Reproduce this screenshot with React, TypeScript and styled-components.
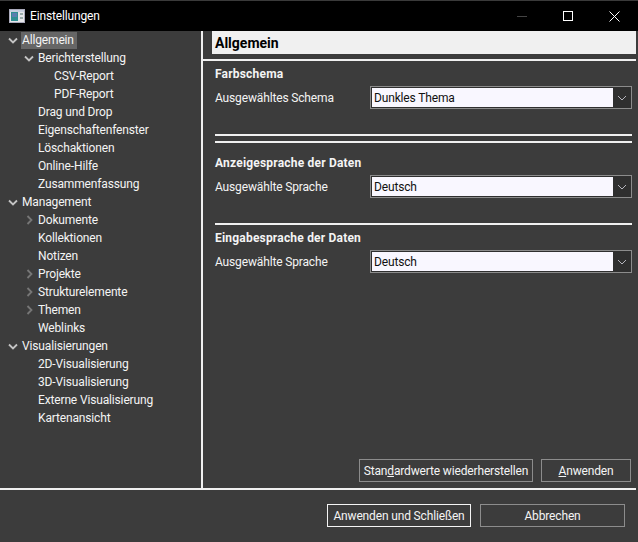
import React from 'react'
import styled, { createGlobalStyle } from 'styled-components'

const GlobalStyle = createGlobalStyle`
  html, body {
    margin: 0;
    padding: 0;
    background: #3c3c3c;
  }
`

const Window = styled.div`
  width: 638px;
  height: 542px;
  box-sizing: border-box;
  display: flex;
  flex-direction: column;
  background: #3c3c3c;
  color: #f4f4f4;
  font-family: 'Roboto', 'Noto Sans', 'Liberation Sans', sans-serif;
  font-size: 12px;
  letter-spacing: -0.15px;
  overflow: hidden;
`

const TitleBar = styled.div`
  height: 31px;
  flex: none;
  box-sizing: border-box;
  border-top: 1px solid #3a3a3a;
  background: #000;
  color: #fff;
  display: flex;
  align-items: center;
  padding: 0 1px 0 9px;
`

const TitleText = styled.span`
  margin-left: 5px;
  flex: 1;
`

const WinButton = styled.div`
  width: 46px;
  height: 30px;
  display: flex;
  align-items: center;
  justify-content: center;
`

const Main = styled.div`
  flex: none;
  height: 457px;
  display: flex;
`

const Sidebar = styled.div`
  width: 201px;
  flex: none;
  border-right: 2px solid #f0f0f0;
`

const TreeRow = styled.div<{ $level: number }>`
  height: 18px;
  display: flex;
  align-items: center;
  padding-left: ${({ $level }) => 5 + $level * 16}px;
  white-space: nowrap;
`

const Arrow = styled.div`
  width: 16px;
  flex: none;
  display: flex;
  align-items: center;
  justify-content: center;
`

const RowLabel = styled.span<{ $selected?: boolean }>`
  padding: 0 3px 0 1px;
  line-height: 17px;
  background: ${({ $selected }) => ($selected ? '#666' : 'transparent')};
`

const Content = styled.div`
  flex: 1;
  display: flex;
  flex-direction: column;
  padding-right: 2px;
`

const Header = styled.div`
  height: 23px;
  margin-left: 9px;
  padding-left: 3px;
  background: #f0f0f0;
  color: #000;
  font-size: 14px;
  font-weight: 700;
  letter-spacing: 0;
  line-height: 25px;
`

const HeaderRule = styled.div`
  height: 2px;
  margin-top: 5px;
  background: #f0f0f0;
`

const Section = styled.div<{ $top: number }>`
  margin: ${({ $top }) => $top}px 4px 0 12px;
`

const SectionTitle = styled.div`
  font-weight: 700;
  letter-spacing: 0.2px;
  height: 17px;
  line-height: 18px;
`

const Field = styled.div`
  margin-top: 4px;
  display: flex;
  align-items: center;
`

const FieldLabel = styled.span`
  width: 155px;
  flex: none;
`

const Select = styled.div`
  flex: 1;
  height: 23px;
  box-sizing: border-box;
  border: 1px solid #8c8c8c;
  padding: 1px 0 1px 1px;
  display: flex;
  background: #2f2f2f;
`

const SelectValue = styled.div`
  flex: 1;
  background: #f9f7ff;
  color: #111;
  padding-left: 2px;
  line-height: 20px;
`

const SelectArrow = styled.div`
  width: 18px;
  flex: none;
  display: flex;
  align-items: center;
  justify-content: center;
`

const Rule = styled.div<{ $top: number }>`
  height: 2px;
  margin: ${({ $top }) => $top}px 4px 0 12px;
  background: #f0f0f0;
`

const ApplyRow = styled.div`
  margin-top: auto;
  margin-bottom: 6px;
  margin-right: 5px;
  display: flex;
  justify-content: flex-end;
  gap: 8px;
`

const Button = styled.div<{ $width: number; $primary?: boolean }>`
  width: ${({ $width }) => $width}px;
  height: 23px;
  box-sizing: border-box;
  border: 1px solid ${({ $primary }) => ($primary ? '#f4f4f4' : '#8c8c8c')};
  display: flex;
  align-items: center;
  justify-content: center;
  white-space: pre;
`

const Key = styled.span`
  text-decoration: underline;
`

const BottomRule = styled.div`
  height: 2px;
  flex: none;
  margin-right: 2px;
  background: #f0f0f0;
`

const Footer = styled.div`
  flex: 1;
  display: flex;
  justify-content: flex-end;
  gap: 9px;
  padding: 14px 13px 0 0;
`

const AppIcon = () => (
  <svg width="16" height="14" viewBox="0 0 16 14">
    <rect x="0.5" y="0.5" width="15" height="13" fill="#e6e6ea" stroke="#aab" />
    <rect x="1" y="1" width="14" height="2" fill="#c9d0e0" />
    <rect x="2" y="3" width="7" height="9" fill="#2f8f92" />
    <rect x="3" y="4" width="5" height="4" fill="#5a7fb0" />
    <rect x="11" y="4" width="3" height="2" fill="#9aa" />
    <rect x="11" y="8" width="3" height="2" fill="#9aa" />
  </svg>
)

const Down = () => (
  <svg width="10" height="7" viewBox="0 0 10 7">
    <path d="M1 1.5 L5 5.5 L9 1.5" fill="none" stroke="#c4c4c4" strokeWidth="1.8" />
  </svg>
)

const Right = () => (
  <svg width="7" height="10" viewBox="0 0 7 10">
    <path d="M1.5 1 L5.5 5 L1.5 9" fill="none" stroke="#777" strokeWidth="1.8" />
  </svg>
)

const SmallDown = () => (
  <svg width="10" height="6" viewBox="0 0 10 6">
    <path d="M1 1 L5 5 L9 1" fill="none" stroke="#b4b4bc" strokeWidth="1" />
  </svg>
)

type TreeItem = { label: string; level: number; arrow?: 'down' | 'right'; selected?: boolean }

const tree: TreeItem[] = [
  { label: 'Allgemein', level: 0, arrow: 'down', selected: true },
  { label: 'Berichterstellung', level: 1, arrow: 'down' },
  { label: 'CSV-Report', level: 2 },
  { label: 'PDF-Report', level: 2 },
  { label: 'Drag und Drop', level: 1 },
  { label: 'Eigenschaftenfenster', level: 1 },
  { label: 'Löschaktionen', level: 1 },
  { label: 'Online-Hilfe', level: 1 },
  { label: 'Zusammenfassung', level: 1 },
  { label: 'Management', level: 0, arrow: 'down' },
  { label: 'Dokumente', level: 1, arrow: 'right' },
  { label: 'Kollektionen', level: 1 },
  { label: 'Notizen', level: 1 },
  { label: 'Projekte', level: 1, arrow: 'right' },
  { label: 'Strukturelemente', level: 1, arrow: 'right' },
  { label: 'Themen', level: 1, arrow: 'right' },
  { label: 'Weblinks', level: 1 },
  { label: 'Visualisierungen', level: 0, arrow: 'down' },
  { label: '2D-Visualisierung', level: 1 },
  { label: '3D-Visualisierung', level: 1 },
  { label: 'Externe Visualisierung', level: 1 },
  { label: 'Kartenansicht', level: 1 },
]

const FieldRow = ({ label, value }: { label: string; value: string }) => (
  <Field>
    <FieldLabel>{label}</FieldLabel>
    <Select>
      <SelectValue>{value}</SelectValue>
      <SelectArrow>
        <SmallDown />
      </SelectArrow>
    </Select>
  </Field>
)

export default function App() {
  return (
    <Window>
      <GlobalStyle />
      <TitleBar>
        <AppIcon />
        <TitleText>Einstellungen</TitleText>
        <WinButton>
          <svg width="10" height="1" viewBox="0 0 10 1">
            <rect width="10" height="1" fill="#444" />
          </svg>
        </WinButton>
        <WinButton>
          <svg width="10" height="10" viewBox="0 0 10 10">
            <rect x="0.5" y="0.5" width="9" height="9" fill="none" stroke="#fff" />
          </svg>
        </WinButton>
        <WinButton>
          <svg width="11" height="11" viewBox="0 0 11 11">
            <path d="M0.5 0.5 L10.5 10.5 M10.5 0.5 L0.5 10.5" stroke="#fff" strokeWidth="1" />
          </svg>
        </WinButton>
      </TitleBar>
      <Main>
        <Sidebar>
          {tree.map((item) => (
            <TreeRow key={item.label} $level={item.level}>
              <Arrow>
                {item.arrow === 'down' && <Down />}
                {item.arrow === 'right' && <Right />}
              </Arrow>
              <RowLabel $selected={item.selected}>{item.label}</RowLabel>
            </TreeRow>
          ))}
        </Sidebar>
        <Content>
          <Header>Allgemein</Header>
          <HeaderRule />
          <Section $top={4}>
            <SectionTitle>Farbschema</SectionTitle>
            <FieldRow label="Ausgewähltes Schema" value="Dunkles Thema" />
          </Section>
          <Rule $top={25} />
          <Rule $top={5} />
          <Section $top={11}>
            <SectionTitle>Anzeigesprache der Daten</SectionTitle>
            <FieldRow label="Ausgewählte Sprache" value="Deutsch" />
          </Section>
          <Rule $top={25} />
          <Section $top={4}>
            <SectionTitle>Eingabesprache der Daten</SectionTitle>
            <FieldRow label="Ausgewählte Sprache" value="Deutsch" />
          </Section>
          <ApplyRow>
            <Button $width={174}>
              Stan<Key>d</Key>ardwerte wiederherstellen
            </Button>
            <Button $width={90}>
              <Key>A</Key>nwenden
            </Button>
          </ApplyRow>
        </Content>
      </Main>
      <BottomRule />
      <Footer>
        <Button $width={144} $primary>
          Anwenden und Schließen
        </Button>
        <Button $width={145}>Abbrechen</Button>
      </Footer>
    </Window>
  )
}
